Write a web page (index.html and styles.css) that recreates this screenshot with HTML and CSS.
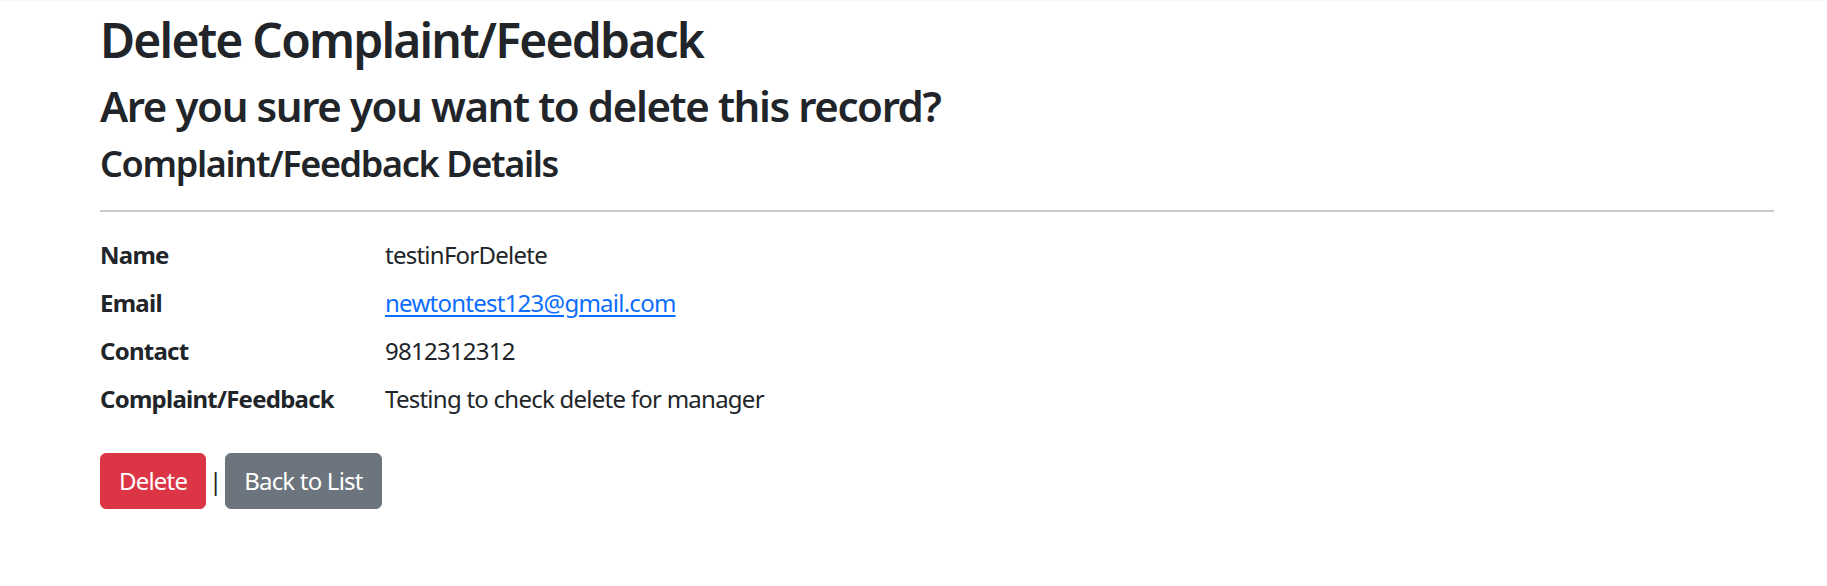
FILE: index.html
```html
<!DOCTYPE html>
<html lang="en">
<head>
<meta charset="utf-8">
<title>Delete Complaint/Feedback</title>
<link rel="stylesheet" href="styles.css">
</head>
<body>
<main class="container">
  <h2 class="title">Delete Complaint/Feedback</h2>
  <h3 class="question">Are you sure you want to delete this record?</h3>
  <section class="record">
    <h4 class="section-title">Complaint/Feedback Details</h4>
    <hr class="divider">
    <dl class="details">
      <dt>Name</dt>
      <dd>testinForDelete</dd>
      <dt>Email</dt>
      <dd><a class="link" href="#">newtontest123@gmail.com</a></dd>
      <dt>Contact</dt>
      <dd>9812312312</dd>
      <dt>Complaint/Feedback</dt>
      <dd>Testing to check delete for manager</dd>
    </dl>
    <form class="actions">
      <button type="button" class="btn btn-danger">Delete</button>
      <span class="sep">|</span>
      <a class="btn btn-secondary" href="#">Back to List</a>
    </form>
  </section>
</main>
</body>
</html>
```

FILE: styles.css
```css
html, body {
  margin: 0;
  padding: 0;
  background: #ffffff;
}

body {
  font-family: "Noto Sans", "Open Sans", sans-serif;
  font-size: 24px;
  line-height: 36px;
  color: #212529;
  box-shadow: inset 0 3px 3px -3px rgba(0, 0, 0, 0.08);
  min-height: 586px;
}

.container {
  padding: 11px 53px 0 100px;
}

.title {
  margin: 0 0 12px;
  font-size: 48px;
  line-height: 57.6px;
  font-weight: 600;
  letter-spacing: -1.8px;
}

.question {
  margin: 0 0 11px;
  font-size: 42px;
  line-height: 50.4px;
  font-weight: 600;
  letter-spacing: -1.4px;
}

.section-title {
  margin: 0;
  font-size: 36px;
  line-height: 43.2px;
  font-weight: 600;
  letter-spacing: -1.35px;
}

.divider {
  margin: 25px 0 25px;
  border: 0;
  border-top: 2px solid #c8c9ca;
  height: 0;
}

.details {
  display: grid;
  grid-template-columns: 285px 1fr;
  margin: 0 0 24px;
}

.details dt,
.details dd {
  margin: 0 0 12px;
  letter-spacing: -0.75px;
}

.details dt {
  font-weight: 700;
}

.link {
  color: #0d6efd;
  text-decoration: underline;
  text-underline-offset: 3px;
}

.actions {
  display: flex;
  align-items: center;
  margin: 0;
}

.sep {
  width: 19px;
  text-align: center;
  line-height: 36px;
}

.btn {
  display: inline-block;
  box-sizing: border-box;
  padding: 9px 18px;
  border: 1px solid transparent;
  border-radius: 6px;
  font-family: inherit;
  font-size: 24px;
  line-height: 36px;
  letter-spacing: -0.8px;
  color: #ffffff;
  text-decoration: none;
  cursor: pointer;
}

.btn-danger {
  background: #dc3545;
  border-color: #dc3545;
}

.btn-secondary {
  background: #6c757d;
  border-color: #6c757d;
}
```
